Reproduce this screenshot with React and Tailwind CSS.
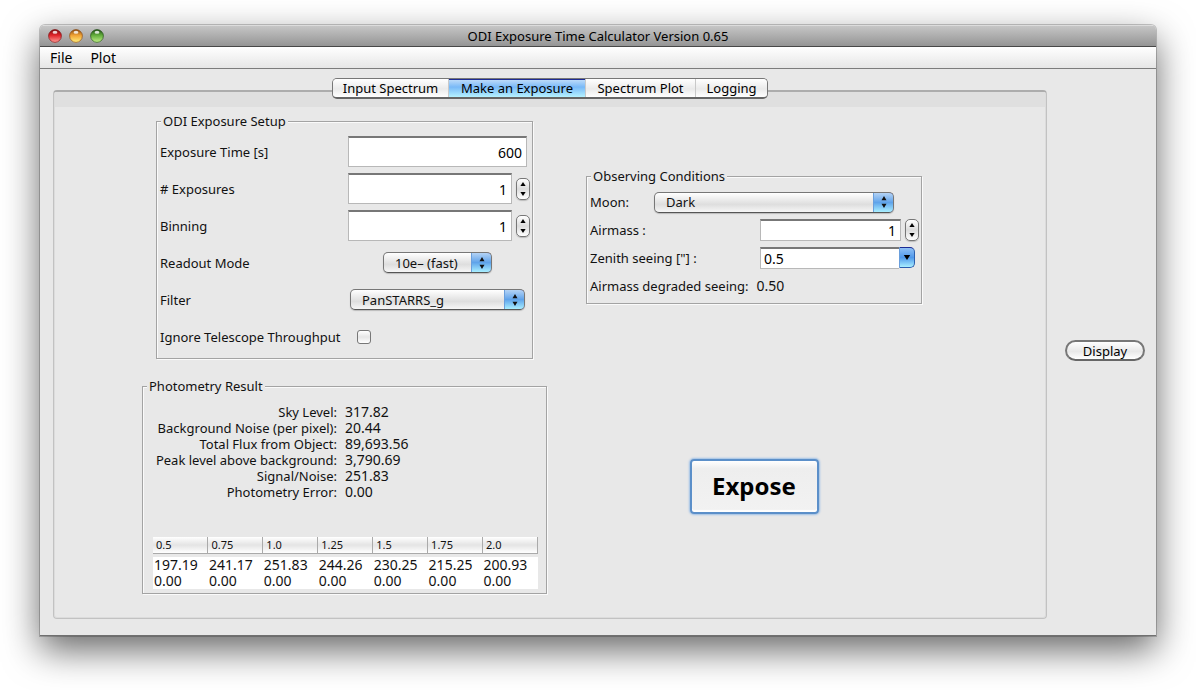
import { useState } from "react";

const fieldClass =
  "min-w-0 rounded-none border border-[#b8b8b8] border-t-2 border-t-[#777] bg-white text-sm leading-4 text-black outline-none";

function Group({ title, className = "", bodyClass = "", children }) {
  return (
    <fieldset
      className={
        "min-w-0 border border-[#a3a3a3] shadow-[1px_1px_0_#fafafa,inset_1px_1px_0_#fafafa] " + className
      }
    >
      <legend className="ml-1 bg-[#e8e8e8] px-0.5 leading-4">{title}</legend>
      <div className={bodyClass}>{children}</div>
    </fieldset>
  );
}

function Arrows({ className }) {
  return (
    <svg viewBox="0 0 6 13" className={className} aria-hidden="true">
      <path d="M3 0 L5.7 4.5 H0.3 Z M0.3 8.5 H5.7 L3 13 Z" fill="#111" />
    </svg>
  );
}

function PopUp({ id, options, className = "", label }) {
  return (
    <div
      className={
        "relative h-[21px] overflow-hidden rounded-[5px] border border-[#777] border-b-[#555] bg-linear-to-b from-white via-[#dedede] via-60% to-[#f6f6f6] shadow-[0_1px_1px_#bbb] " +
        className
      }
    >
      <select
        id={id}
        aria-label={label}
        className="block h-full w-full appearance-none bg-transparent pr-6 pl-[11px] leading-4 outline-none"
      >
        {options.map((o) => (
          <option key={o}>{o}</option>
        ))}
      </select>
      <span className="pointer-events-none absolute -top-px -right-px -bottom-px flex w-[21px] items-center justify-center rounded-r-[5px] border border-[#2b5fae] border-t-[#1b2b94] border-l-[#6a9fdc] bg-linear-to-b from-[#b4d3f5] via-[#5fa3ea] via-50% to-[#a9efff]">
        <Arrows className="h-3 w-[6px]" />
      </span>
    </div>
  );
}

function Spinner({ id, initial, height, className = "" }) {
  const [value, setValue] = useState(initial);
  return (
    <div className={"flex items-center gap-1 " + className}>
      <input
        id={id}
        type="text"
        inputMode="numeric"
        value={value}
        onChange={(e) => setValue(e.target.value)}
        className={fieldClass + " flex-1 px-1 text-right " + height}
      />
      <div className="flex h-[22px] w-[14px] flex-col overflow-hidden rounded-[5px] border border-[#777] bg-linear-to-b from-white via-[#dcdcdc] to-white shadow-[0_1px_1px_#bbb]">
        <button
          type="button"
          aria-label="Increase"
          onClick={() => setValue(Number(value) + 1)}
          className="flex flex-1 items-center justify-center"
        >
          <svg viewBox="0 0 6 4" className="h-1 w-[6px]"><path d="M3 0L5.6 4H.4Z" /></svg>
        </button>
        <button
          type="button"
          aria-label="Decrease"
          onClick={() => setValue(Number(value) - 1)}
          className="flex flex-1 items-center justify-center"
        >
          <svg viewBox="0 0 6 4" className="h-1 w-[6px]"><path d="M3 4L5.6 0H.4Z" /></svg>
        </button>
      </div>
    </div>
  );
}

function SetupRow({ id, label, children }) {
  return (
    <div className="flex h-[37px] items-center justify-between">
      <label htmlFor={id}>{label}</label>
      <div className="flex w-[184px]">{children}</div>
    </div>
  );
}

const lights = [
  { name: "Close", id: "l1", top: "#7c0d10", mid: "#e0262c", low: "#ff9d97" },
  { name: "Minimize", id: "l2", top: "#8a4a12", mid: "#f0a234", low: "#fff07c" },
  { name: "Zoom", id: "l3", top: "#215016", mid: "#63ae3c", low: "#c3f08a" },
];

const results = [
  ["Sky Level:", "317.82"],
  ["Background Noise (per pixel):", "20.44"],
  ["Total Flux from Object:", "89,693.56"],
  ["Peak level above background:", "3,790.69"],
  ["Signal/Noise:", "251.83"],
  ["Photometry Error:", "0.00"],
];

const apertures = ["0.5", "0.75", "1.0", "1.25", "1.5", "1.75", "2.0"];
const rows = [
  ["197.19", "241.17", "251.83", "244.26", "230.25", "215.25", "200.93"],
  ["0.00", "0.00", "0.00", "0.00", "0.00", "0.00", "0.00"],
];

const tabs = [
  { name: "Input Spectrum", width: "w-[116px]" },
  { name: "Make an Exposure", width: "w-[137px]" },
  { name: "Spectrum Plot", width: "w-[110px]" },
  { name: "Logging", width: "w-[71px]" },
];

export default function App() {
  const [tab, setTab] = useState("Make an Exposure");
  return (
    <div className="flex min-h-screen flex-col bg-white px-10 pt-[25px] pb-[54px] font-['Noto_Sans',sans-serif] text-[13px] leading-4 text-[#111]">
      <div className="flex flex-1 flex-col overflow-hidden rounded-t-[5px] border-b border-[#707070] bg-[#e8e8e8] shadow-[0_0_0_1px_rgba(0,0,0,0.2),0_14px_36px_rgba(0,0,0,0.6)]">
        <header className="grid h-[22px] shrink-0 grid-cols-[1fr_auto_1fr] items-center border-t border-b border-t-[#dcdcdc] border-b-[#484848] bg-linear-to-b from-[#c6c6c6] to-[#959595] px-2">
          <div className="flex gap-[7px]">
            {lights.map((l) => (
              <button key={l.name} type="button" aria-label={l.name} className="h-[14px] w-[14px]">
                <svg viewBox="0 0 14 14" className="h-full w-full">
                  <defs>
                    <linearGradient id={l.id} x1="0" y1="0" x2="0" y2="1">
                      <stop offset="0" stopColor={l.top} />
                      <stop offset="0.45" stopColor={l.mid} />
                      <stop offset="1" stopColor={l.low} />
                    </linearGradient>
                  </defs>
                  <circle cx="7" cy="7.5" r="6.5" fill="#d8d8d8" opacity="0.7" />
                  <circle cx="7" cy="7" r="6.4" fill={"url(#" + l.id + ")"} stroke={l.top} strokeOpacity="0.7" />
                  <ellipse cx="7" cy="3.2" rx="2.4" ry="1.5" fill="#fff" opacity="0.8" />
                </svg>
              </button>
            ))}
          </div>
          <h1 className="leading-4 text-black">ODI Exposure Time Calculator Version 0.65</h1>
        </header>

        <nav className="flex h-[22px] shrink-0 items-center gap-[18px] border-b border-[#7c7c7c] bg-linear-to-b from-white to-[#e6e6e6] px-[10px] text-sm leading-4 text-black">
          <button type="button">File</button>
          <button type="button">Plot</button>
        </nav>

        <main className="flex flex-1 items-stretch gap-[18px] pt-[9px] pr-[11px] pb-4 pl-[13px]">
          <div className="flex flex-1 flex-col">
            <div
              role="tablist"
              className="relative z-10 flex h-[21px] self-center overflow-hidden rounded-[5px] border border-[#777] border-b-2 border-b-[#666]"
            >
              {tabs.map((t) => (
                <button
                  key={t.name}
                  type="button"
                  role="tab"
                  aria-selected={tab === t.name}
                  onClick={() => setTab(t.name)}
                  className={
                    "border-r border-[#c9c9c9] leading-4 text-black last:border-r-0 " +
                    t.width +
                    (tab === t.name
                      ? " bg-linear-to-b from-[#c4dff9] via-[#79b9f7] via-45% to-[#b5f2ff] shadow-[inset_0_1px_0_#1d2b94]"
                      : " bg-linear-to-b from-white via-[#eaeaea] via-55% to-white")
                  }
                >
                  {t.name}
                </button>
              ))}
            </div>

            <section className="-mt-[9px] flex flex-1 flex-col rounded-[4px] border border-t-2 border-[#c2c2c2] border-t-[#acacac] px-px shadow-[inset_0_0_0_1px_#dcdcdc]">
              <div className="h-[15px] shrink-0 bg-[#dfdfdf]" />
              <div className="grid grid-cols-[405px_336px] items-center justify-center gap-x-[39px] gap-y-[19px] pt-[6px] pr-9">
                <Group title="ODI Exposure Setup" className="w-[377px] justify-self-center" bodyClass="pt-1 pb-[3px] pl-[3px]">
                  <SetupRow id="time" label="Exposure Time [s]">
                    <input id="time" type="text" defaultValue="600" className={fieldClass + " h-[31px] w-[179px] px-1 text-right"} />
                  </SetupRow>
                  <SetupRow id="count" label="# Exposures">
                    <Spinner id="count" initial="1" height="h-[31px]" className="w-[182px]" />
                  </SetupRow>
                  <SetupRow id="binning" label="Binning">
                    <Spinner id="binning" initial="1" height="h-[31px]" className="w-[182px]" />
                  </SetupRow>
                  <SetupRow id="readout" label="Readout Mode">
                    <PopUp id="readout" options={["10e– (fast)", "5e– (slow)"]} className="ml-[35px] w-[109px]" />
                  </SetupRow>
                  <SetupRow id="filter" label="Filter">
                    <PopUp id="filter" options={["PanSTARRS_g", "PanSTARRS_r"]} className="ml-0.5 w-[175px]" />
                  </SetupRow>
                  <SetupRow id="ignore" label="Ignore Telescope Throughput">
                    <input
                      id="ignore"
                      type="checkbox"
                      className="ml-[9px] h-[14px] w-[14px] appearance-none rounded-[3px] border border-[#777] bg-linear-to-b from-white via-[#e6e6e6] to-white checked:bg-[#5fa3ea]"
                    />
                  </SetupRow>
                </Group>

                <Group title="Observing Conditions" bodyClass="pt-1 pr-0.5 pb-[3px] pl-[3px]">
                  <div className="flex h-7 items-center">
                    <label htmlFor="moon" className="w-16">Moon:</label>
                    <PopUp id="moon" options={["Dark", "Grey", "Bright"]} className="w-60" />
                  </div>
                  <div className="flex h-7 items-center justify-between">
                    <label htmlFor="airmass">Airmass :</label>
                    <Spinner id="airmass" initial="1" height="h-[22px]" className="w-[159px]" />
                  </div>
                  <div className="flex h-7 items-center justify-between">
                    <label htmlFor="seeing">Zenith seeing ["] :</label>
                    <div className="mr-1 flex w-[155px]">
                      <input id="seeing" type="text" defaultValue="0.5" className={fieldClass + " h-[22px] flex-1 border-r-0 px-[3px]"} />
                      <button
                        type="button"
                        aria-label="Show seeing values"
                        className="flex h-[21px] w-4 items-center justify-center rounded-r-[5px] border border-[#2b5fae] border-t-[#1b2b94] border-l-[#6a9fdc] bg-linear-to-b from-[#8fc0f5] via-[#4f98ea] via-50% to-[#a9efff]"
                      >
                        <svg viewBox="0 0 8 5" className="h-[5px] w-2"><path d="M.8 0H7.2L4 5Z" /></svg>
                      </button>
                    </div>
                  </div>
                  <div className="flex h-7 items-center gap-2">
                    <span>Airmass degraded seeing:</span>
                    <span className="text-sm leading-4">0.50</span>
                  </div>
                </Group>

                <Group title="Photometry Result" bodyClass="px-[10px] pt-[10px] pb-1">
                  <dl className="grid grid-cols-[184px_1fr] gap-x-2">
                    {results.map(([name, value]) => (
                      <div key={name} className="contents">
                        <dt className="text-right whitespace-nowrap">{name}</dt>
                        <dd className="text-sm leading-4">{value}</dd>
                      </div>
                    ))}
                  </dl>
                  <table className="mt-[37px] w-[385px] table-fixed border-collapse">
                    <thead>
                      <tr>
                        {apertures.map((a) => (
                          <th
                            key={a}
                            scope="col"
                            className="h-4 border-r border-b border-[#aaa] bg-linear-to-b from-white via-[#e4e4e4] to-white pl-[3px] text-left text-[11px] leading-[14px] font-normal"
                          >
                            {a}
                          </th>
                        ))}
                      </tr>
                    </thead>
                    <tbody>
                      <tr className="h-1">
                        <td colSpan={7} />
                      </tr>
                      {rows.map((r, i) => (
                        <tr key={i} className="h-4 bg-white">
                          {r.map((v, j) => (
                            <td key={j} className="pl-px text-sm leading-4">{v}</td>
                          ))}
                        </tr>
                      ))}
                    </tbody>
                  </table>
                </Group>

                <button
                  type="button"
                  className="h-[55px] w-[129px] justify-self-center rounded-[4px] border-2 border-[#5b8fc9] bg-linear-to-b from-white via-[#eee] via-15% to-[#f2f2f2] text-2xl font-bold text-black shadow-[0_0_2px_1px_#9dbfe6,inset_0_-2px_1px_#fff]"
                >
                  Expose
                </button>
              </div>
            </section>
          </div>

          <button
            type="button"
            className="mt-1 h-[21px] w-20 self-center rounded-full border-2 border-[#777] border-b-[#666] bg-linear-to-b from-white via-[#e8e8e8] via-55% to-white leading-4 text-black"
          >
            Display
          </button>
        </main>
      </div>
    </div>
  );
}
